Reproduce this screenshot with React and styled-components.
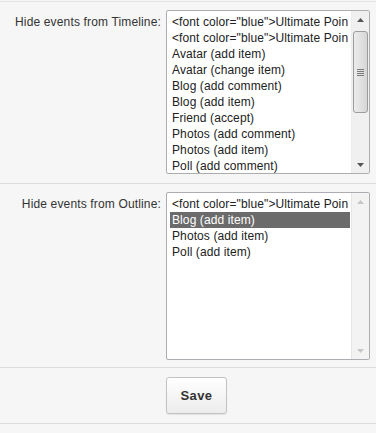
import styled, { createGlobalStyle } from "styled-components";

const Global = createGlobalStyle`
  html, body {
    margin: 0;
    padding: 0;
    background: #f6f6f6;
  }
  body {
    font-family: "Liberation Sans", Arial, sans-serif;
    font-size: 12px;
    color: #333;
  }
`;

const timelineItems = [
  '<font color="blue">Ultimate Poin',
  '<font color="blue">Ultimate Poin',
  "Avatar (add item)",
  "Avatar (change item)",
  "Blog (add comment)",
  "Blog (add item)",
  "Friend (accept)",
  "Photos (add comment)",
  "Photos (add item)",
  "Poll (add comment)",
];

const outlineItems = [
  '<font color="blue">Ultimate Poin',
  "Blog (add item)",
  "Photos (add item)",
  "Poll (add item)",
];

const Page = styled.div`
  width: 376px;
  border-top: 1px solid #e4e4e4;
  margin-top: 1px;
`;

const Row = styled.div`
  display: grid;
  grid-template-columns: 161px 204px;
  column-gap: 5px;
  padding: ${(p) => p.$pad};
  border-bottom: 1px solid #dcdcdc;
`;

const Label = styled.label`
  text-align: right;
  padding-top: 5px;
  line-height: 14px;
  letter-spacing: 0.15px;
  color: #333;
`;

const ListBox = styled.div`
  box-sizing: border-box;
  height: ${(p) => p.$h}px;
  border: 1px solid #abadb3;
  border-radius: 2px;
  background: #fff;
  display: flex;
  overflow: hidden;
`;

const Options = styled.div`
  flex: 1;
  min-width: 0;
  padding: 3px 1px 0 3px;
`;

const Option = styled.div`
  height: 16px;
  line-height: 16px;
  padding-left: 2px;
  white-space: nowrap;
  letter-spacing: 0.1px;
  color: ${(p) => (p.$selected ? "#fff" : "#222")};
  background: ${(p) => (p.$selected ? "#6b6b6b" : "transparent")};
`;

const Scroll = styled.div`
  width: 17px;
  flex: none;
  display: flex;
  flex-direction: column;
  background: ${(p) => (p.$disabled ? "#f3f3f3" : "#f0f0f0")};
  border-left: 1px solid ${(p) => (p.$disabled ? "#e6e6e6" : "#ececec")};
`;

const Arrow = styled.div`
  height: 17px;
  display: flex;
  align-items: center;
  justify-content: center;
  flex: none;
`;

const Track = styled.div`
  flex: 1;
  padding: 3px 1px 0;
`;

const Thumb = styled.div`
  height: 82px;
  box-sizing: border-box;
  border: 1px solid #9c9c9c;
  border-radius: 3px;
  background: linear-gradient(to right, #ececec, #e1e1e1 50%, #d6d6d6);
  display: flex;
  align-items: center;
  justify-content: center;
`;

const Grip = styled.div`
  width: 7px;
  height: 7px;
  background: repeating-linear-gradient(
    to bottom,
    #7a7a7a 0 1px,
    transparent 1px 2px
  );
`;

const ButtonRow = styled.div`
  display: grid;
  grid-template-columns: 161px auto;
  column-gap: 5px;
  padding: 9px 0 9px;
  border-bottom: 1px solid #dcdcdc;
`;

const Button = styled.button`
  grid-column: 2;
  justify-self: start;
  width: 61px;
  height: 37px;
  border: 1px solid #c2c2c2;
  border-radius: 3px;
  background: linear-gradient(to bottom, #ffffff, #ececec);
  box-shadow: 0 1px 1px rgba(0, 0, 0, 0.08);
  font-family: "Liberation Sans", Arial, sans-serif;
  font-size: 13px;
  font-weight: bold;
  color: #333;
  letter-spacing: 0.4px;
  cursor: pointer;
`;

const Tri = ({ up, color }) => (
  <svg width="7" height="4" viewBox="0 0 7 4">
    <path d={up ? "M0 4 L3.5 0 L7 4 Z" : "M0 0 L3.5 4 L7 0 Z"} fill={color} />
  </svg>
);

const Scrollbar = ({ disabled }) => (
  <Scroll $disabled={disabled}>
    <Arrow>
      <Tri up color={disabled ? "#c6c6c6" : "#555"} />
    </Arrow>
    <Track>
      {!disabled && (
        <Thumb>
          <Grip />
        </Thumb>
      )}
    </Track>
    <Arrow>
      <Tri color={disabled ? "#c6c6c6" : "#555"} />
    </Arrow>
  </Scroll>
);

export default function App() {
  return (
    <Page>
      <Global />
      <Row $pad="8px 0 9px">
        <Label>Hide events from Timeline:</Label>
        <ListBox $h={164}>
          <Options>
            {timelineItems.map((t, i) => (
              <Option key={i}>{t}</Option>
            ))}
          </Options>
          <Scrollbar />
        </ListBox>
      </Row>
      <Row $pad="8px 0 7px">
        <Label>Hide events from Outline:</Label>
        <ListBox $h={168}>
          <Options>
            {outlineItems.map((t, i) => (
              <Option key={i} $selected={i === 1}>
                {t}
              </Option>
            ))}
          </Options>
          <Scrollbar disabled />
        </ListBox>
      </Row>
      <ButtonRow>
        <Button>Save</Button>
      </ButtonRow>
    </Page>
  );
}
